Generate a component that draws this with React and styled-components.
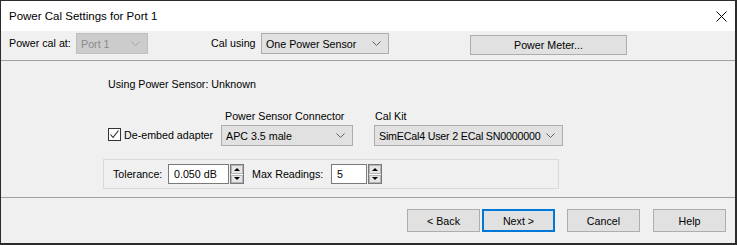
import React from "react";
import styled, { createGlobalStyle } from "styled-components";

const GlobalStyle = createGlobalStyle`
  html, body {
    margin: 0;
    padding: 0;
    background: #2b2b2b;
  }
  body {
    font-family: "Liberation Sans", Arial, sans-serif;
    font-size: 10.7px;
    color: #000;
  }
`;

// Outer frame: dark edges around the dialog window
const Frame = styled.div`
  padding: 1px 2px 2px 1px;
  width: 737px;
  height: 245px;
  box-sizing: border-box;
`;

const Window = styled.div`
  display: flex;
  flex-direction: column;
  width: 734px;
  height: 242px;
  background: #f0f0f0;
`;

const TitleBar = styled.div`
  display: flex;
  align-items: center;
  justify-content: space-between;
  height: 30px;
  padding: 0 8px;
  background: #fff;
  font-size: 11.5px;
  box-sizing: border-box;
`;

const CloseIcon = () => (
  <svg width="11" height="11" viewBox="0 0 11 11">
    <path d="M0.5 0.5 L10.5 10.5 M10.5 0.5 L0.5 10.5" stroke="#000" strokeWidth="1" />
  </svg>
);

const TopRow = styled.div`
  display: flex;
  align-items: center;
  height: 29px;
  padding: 0 0 4px 8px;
  box-sizing: border-box;
`;

const Label = styled.span`
  display: inline-block;
  width: ${({ w }) => (w ? `${w}px` : "auto")};
  margin-left: ${({ ml }) => ml || 0}px;
  line-height: 13px;
  white-space: nowrap;
`;

const Separator = styled.div`
  height: 1px;
  background: #a0a0a0;
`;

const ComboBox = styled.div`
  display: flex;
  align-items: center;
  justify-content: space-between;
  width: ${({ w }) => w}px;
  height: 21px;
  padding: 0 7px 0 4px;
  box-sizing: border-box;
  background: ${({ disabled }) => (disabled ? "#cccccc" : "#e1e1e1")};
  border: 1px solid ${({ disabled }) => (disabled ? "#bfbfbf" : "#adadad")};
  color: ${({ disabled }) => (disabled ? "#8a8a8a" : "#000")};
  white-space: nowrap;
`;

const ComboText = styled.span`
  letter-spacing: ${({ tight }) => (tight ? "-0.2px" : "normal")};
`;

const Chevron = ({ color }) => (
  <svg width="9" height="5" viewBox="0 0 9 5">
    <path d="M0.5 0.5 L4.5 4.5 L8.5 0.5" fill="none" stroke={color} strokeWidth="1" />
  </svg>
);

const Combo = ({ w, disabled, tight, children }) => (
  <ComboBox w={w} disabled={disabled}>
    <ComboText tight={tight}>{children}</ComboText>
    <Chevron color={disabled ? "#a6a6a6" : "#606060"} />
  </ComboBox>
);

const Button = styled.div`
  display: flex;
  align-items: center;
  justify-content: center;
  width: ${({ w }) => w}px;
  height: ${({ h }) => h || 23}px;
  margin-left: ${({ ml }) => ml || 0}px;
  margin-top: ${({ mt }) => mt || 0}px;
  box-sizing: border-box;
  background: #e1e1e1;
  border: ${({ focused }) => (focused ? "2px solid #0078d7" : "1px solid #adadad")};
  white-space: nowrap;
`;

const Body = styled.div`
  display: flex;
  flex-direction: column;
  height: 136px;
  padding-left: 107px;
  box-sizing: border-box;
`;

const InfoText = styled.div`
  margin-top: 17px;
  line-height: 13px;
`;

const FieldRow = styled.div`
  display: flex;
  align-items: flex-end;
  margin-top: 19px;
`;

const CheckWrap = styled.label`
  display: flex;
  align-items: center;
  width: 113px;
  margin-bottom: 5px;
`;

const CheckBox = styled.span`
  display: inline-flex;
  align-items: center;
  justify-content: center;
  width: 13px;
  height: 13px;
  box-sizing: border-box;
  border: 1px solid #333;
  background: #fff;
  margin-right: 3px;
`;

const Field = styled.div`
  display: flex;
  flex-direction: column;
  gap: 2px;
  margin-left: ${({ ml }) => ml || 0}px;
`;

const FieldLabel = styled.span`
  line-height: 13px;
  padding-left: ${({ indent }) => indent || 0}px;
`;

const GroupBox = styled.div`
  display: flex;
  align-items: center;
  width: 456px;
  height: 30px;
  margin: 13px 0 0 -5px;
  padding-left: 9px;
  box-sizing: border-box;
  border: 1px solid #dadada;
`;

const TextInput = styled.div`
  display: flex;
  align-items: center;
  width: ${({ w }) => w}px;
  height: 20px;
  margin-left: ${({ ml }) => ml || 0}px;
  padding-left: 5px;
  box-sizing: border-box;
  background: #fff;
  border: 1px solid #7a7a7a;
`;

const Spinner = styled.div`
  display: flex;
  flex-direction: column;
  width: 14px;
  height: 20px;
  margin-left: 1px;
  box-sizing: border-box;
  border: 1px solid #7a7a7a;
  background: #fff;
`;

const SpinHalf = styled.div`
  flex: 1;
  display: flex;
  align-items: center;
  justify-content: center;
  background: #e6e6e6;
  border: 1px solid #b4b4b4;
  margin: ${({ up }) => (up ? "0 0 0 0" : "1px 0 0 0")};

  &::after {
    content: "";
    width: 0;
    height: 0;
    border-left: 3px solid transparent;
    border-right: 3px solid transparent;
    ${({ up }) =>
      up ? "border-bottom: 3px solid #000;" : "border-top: 3px solid #000;"}
  }
`;

const Spin = () => (
  <Spinner>
    <SpinHalf up />
    <SpinHalf />
  </Spinner>
);

const Footer = styled.div`
  display: flex;
  justify-content: flex-end;
  flex: 1;
  padding: 11px 9px 0 0;
  box-sizing: border-box;
`;

export default function App() {
  return (
    <Frame>
      <GlobalStyle />
      <Window>
        <TitleBar>
          <span>Power Cal Settings for Port 1</span>
          <CloseIcon />
        </TitleBar>

        <TopRow>
          <Label w={67}>Power cal at:</Label>
          <Combo w={72} disabled>Port 1</Combo>
          <Label w={50} ml={63}>Cal using</Label>
          <Combo w={128}>One Power Sensor</Combo>
          <Button w={157} h={20} ml={81} mt={3}>Power Meter...</Button>
        </TopRow>
        <Separator />

        <Body>
          <InfoText>Using Power Sensor: Unknown</InfoText>
          <FieldRow>
            <CheckWrap>
              <CheckBox>
                <svg width="11" height="11" viewBox="0 0 11 11">
                  <path d="M1.5 5.5 L4 8.5 L9.5 1.5" fill="none" stroke="#222" strokeWidth="1.1" />
                </svg>
              </CheckBox>
              De-embed adapter
            </CheckWrap>
            <Field>
              <FieldLabel indent={4}>Power Sensor Connector</FieldLabel>
              <Combo w={132}>APC 3.5 male</Combo>
            </Field>
            <Field ml={21}>
              <FieldLabel indent={1}>Cal Kit</FieldLabel>
              <Combo w={189} tight>SimECal4 User 2 ECal SN0000000</Combo>
            </Field>
          </FieldRow>
          <GroupBox>
            <Label w={55}>Tolerance:</Label>
            <TextInput w={61}>0.050 dB</TextInput>
            <Spin />
            <Label w={79} ml={8}>Max Readings:</Label>
            <TextInput w={36}>5</TextInput>
            <Spin />
          </GroupBox>
        </Body>
        <Separator />

        <Footer>
          <Button w={73}>&lt; Back</Button>
          <Button w={73} ml={2} focused>Next &gt;</Button>
          <Button w={73} ml={12}>Cancel</Button>
          <Button w={73} ml={13}>Help</Button>
        </Footer>
      </Window>
    </Frame>
  );
}
